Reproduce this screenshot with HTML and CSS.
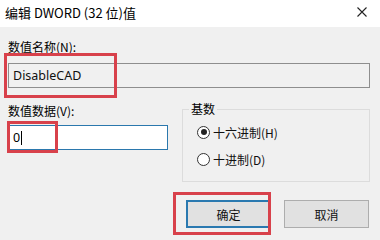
FILE: index.html
```html
<!DOCTYPE html>
<html>
<head>
  <title>编辑 DWORD (32 位)值</title>
  <link rel="stylesheet" href="styles.css">
</head>
<body>
  <div class="dialog">
    <div class="titlebar">
      <span class="title">编辑 DWORD (32 位)值</span>
      <svg class="close" width="10" height="10" viewBox="0 0 10 10">
        <path d="M0.5 0.5L9.5 9.5M9.5 0.5L0.5 9.5" stroke="#222" stroke-width="1.1" fill="none"/>
      </svg>
    </div>

    <div class="content">
      <div class="label name-label">数值名称(N):</div>
      <input class="name-input" type="text" value="DisableCAD" readonly>

      <div class="row">
        <div class="data-col">
          <div class="label">数值数据(V):</div>
          <div class="data-input"><span>0</span><i class="caret"></i></div>
        </div>
        <fieldset class="base">
          <legend>基数</legend>
          <div class="radio"><span class="dot checked"></span>十六进制(H)</div>
          <div class="radio"><span class="dot"></span>十进制(D)</div>
        </fieldset>
      </div>

      <div class="buttons">
        <button class="btn primary">确定</button>
        <button class="btn">取消</button>
      </div>
    </div>

    <!-- red highlight marks -->
    <div class="mark mark-name"></div>
    <div class="mark mark-data"></div>
    <div class="mark mark-ok"></div>
  </div>
</body>
</html>
```

FILE: styles.css
```css
body {
  margin: 0;
  font-family: "Noto Sans CJK SC", "Liberation Sans", sans-serif;
  font-size: 12px;
  color: #000;
  background: #f0f0f0;
}

.dialog {
  position: relative;
  width: 380px;
  height: 240px;
  background: #f0f0f0;
  overflow: hidden;
}

.titlebar {
  height: 27px;
  background: #fff;
  display: flex;
  align-items: center;
  justify-content: space-between;
  padding: 0 13px 0 5px;
}

.title {
  font-size: 13px;
  line-height: 16px;
  margin-top: -2px;
}

.close {
  margin-top: -3px;
}

.content {
  padding: 0 10px 0 8px;
}

.label {
  line-height: 14px;
  height: 14px;
}

.name-label {
  margin-top: 13px;
}

.name-input {
  display: block;
  box-sizing: border-box;
  width: 362px;
  height: 25px;
  margin: 9px 0 0 0;
  padding: 0 0 0 4px;
  border: 1px solid #8e8e8e;
  background: #f0f0f0;
  font-family: "Noto Sans", "Liberation Sans", sans-serif;
  font-size: 12.5px;
  color: #111;
  outline: none;
}

.row {
  display: flex;
  justify-content: space-between;
  margin-top: 14px;
}

.data-col {
  padding-top: 2px;
}

.data-input {
  box-sizing: border-box;
  width: 160px;
  height: 25px;
  margin-top: 7px;
  border: 1px solid #2b78ad;
  background: #fff;
  display: flex;
  align-items: center;
  padding-left: 4px;
  font-family: "Noto Sans", "Liberation Sans", sans-serif;
  font-size: 12.5px;
}

.caret {
  display: inline-block;
  width: 1px;
  height: 14px;
  background: #000;
  margin-left: 1px;
}

.base {
  box-sizing: border-box;
  width: 188px;
  height: 80px;
  margin: 0;
  padding: 9px 0 0 14px;
  border: 1px solid #dcdcdc;
}

.base legend {
  padding: 0 2px;
  margin-left: -8px;
  line-height: 14px;
  font-size: 12px;
}

.radio {
  display: flex;
  align-items: center;
  height: 14px;
  margin-bottom: 13px;
  color: #111;
}

.dot {
  box-sizing: border-box;
  width: 13px;
  height: 13px;
  border: 1px solid #333;
  border-radius: 50%;
  margin-right: 3px;
  background: #fff;
  position: relative;
}

.dot.checked::after {
  content: "";
  position: absolute;
  left: 2.5px;
  top: 2.5px;
  width: 6px;
  height: 6px;
  border-radius: 50%;
  background: #222;
}

.buttons {
  display: flex;
  justify-content: flex-end;
  gap: 13px;
  margin-top: 18px;
  padding-right: 1px;
}

.btn {
  box-sizing: border-box;
  width: 85px;
  height: 28px;
  border: 1px solid #adadad;
  background: #e1e1e1;
  font-family: "Noto Sans CJK SC", sans-serif;
  font-size: 12px;
  color: #111;
  padding: 0;
}

.btn.primary {
  border: 2px solid #2a79b0;
}

.mark {
  position: absolute;
  border: 3px solid #d8414b;
  box-sizing: border-box;
}

.mark-name {
  left: 4px;
  top: 53px;
  width: 113px;
  height: 45px;
}

.mark-data {
  left: 7px;
  top: 121px;
  width: 51px;
  height: 32px;
}

.mark-ok {
  left: 173px;
  top: 192px;
  width: 98px;
  height: 43px;
}
```
